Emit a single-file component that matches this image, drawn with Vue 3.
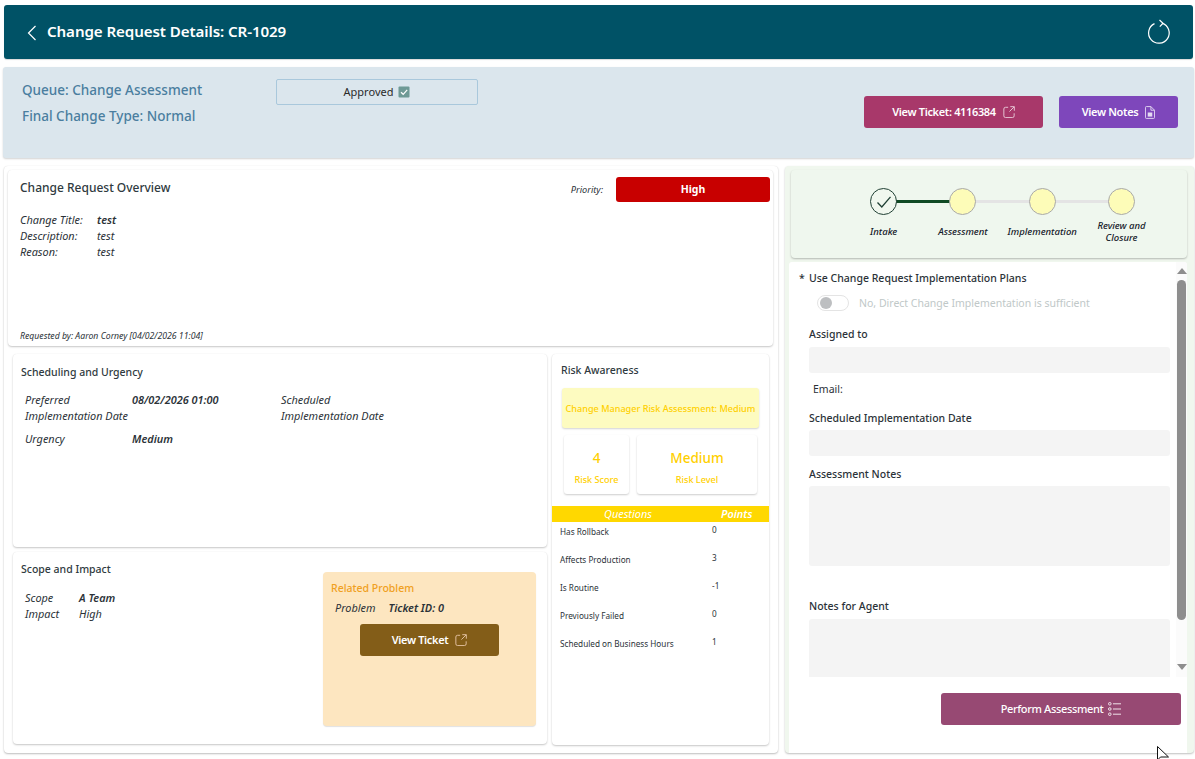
<script setup>
const steps = [
  { name: 'Intake', done: true },
  { name: 'Assessment' },
  { name: 'Implementation' },
  { name: 'Review and Closure' },
]
const questions = [
  ['Has Rollback', '0'],
  ['Affects Production', '3'],
  ['Is Routine', '-1'],
  ['Previously Failed', '0'],
  ['Scheduled on Business Hours', '1'],
]
</script>

<template>
  <div class="page">
    <header class="topbar">
      <svg class="back" width="10" height="16" viewBox="0 0 10 16"><path d="M8.5 1 1.5 8l7 7" fill="none" stroke="#fff" stroke-width="1.2"/></svg>
      <h1>Change Request Details: CR-1029</h1>
      <svg class="refresh" width="24" height="26" viewBox="0 0 24 26"><path d="M15 4.1A10.3 10.3 0 1 1 7.5 4.6" fill="none" stroke="#fff" stroke-width="1.2"/><path d="M12.5 1 16 4.2 12.8 7.6" fill="none" stroke="#fff" stroke-width="1.2"/></svg>
    </header>

    <section class="infobar">
      <div class="queue">
        <div>Queue: Change Assessment</div>
        <div>Final Change Type: Normal</div>
      </div>
      <div class="approved">
        <span>Approved</span>
        <svg width="12" height="12" viewBox="0 0 12 12"><rect x="0.5" y="0.5" width="11" height="11" rx="1" fill="#6f9a96"/><path d="M3 6.2 5.2 8.3 9.2 3.8" fill="none" stroke="#fff" stroke-width="1.2"/></svg>
      </div>
      <div class="info-actions">
        <button class="btn ticket">View Ticket: 4116384
          <svg class="ext" width="12" height="12" viewBox="0 0 14 14"><path d="M6 1.5H3A2 2 0 0 0 1 3.5v8a2 2 0 0 0 2 2h8a2 2 0 0 0 2-2V8.500M8.500 .8h4.700v4.700M13 1 7.500 6.500" fill="none" stroke="#e9cbd8" stroke-width="1.100"/></svg>
        </button>
        <button class="btn notes">View Notes
          <svg width="10" height="13" viewBox="0 0 11 14"><path d="M1.500 .5h5l4 4v8a1 1 0 0 1-1 1h-8a1 1 0 0 1-1-1v-11a1 1 0 0 1 1-1zM6.500 .5v4h4" fill="none" stroke="#e6dcf3" stroke-width="1"/><rect x="3" y="7" width="5" height="4.500" fill="#e6dcf3"/></svg>
        </button>
      </div>
    </section>

    <main class="main">
      <div class="left">
        <section class="card overview">
          <div class="ov-head">
            <h2>Change Request Overview</h2>
            <span class="priority-label">Priority:</span>
            <span class="priority">High</span>
          </div>
          <dl class="ov-grid">
            <dt>Change Title:</dt><dd class="semi">test</dd>
            <dt>Description:</dt><dd>test</dd>
            <dt>Reason:</dt><dd>test</dd>
          </dl>
          <div class="requested">Requested by: Aaron Corney [04/02/2026 11:04]</div>
        </section>

        <div class="lower">
          <div class="col">
            <section class="card sched">
              <h3>Scheduling and Urgency</h3>
              <div class="sched-grid">
                <div class="lab">Preferred<br>Implementation Date</div>
                <div class="val">08/02/2026 01:00</div>
                <div class="lab">Scheduled<br>Implementation Date</div>
                <div class="lab urgency">Urgency</div>
                <div class="val urgency">Medium</div>
              </div>
            </section>
            <section class="card scope">
              <div class="scope-main">
                <h3>Scope and Impact</h3>
                <dl class="scope-grid">
                  <dt>Scope</dt><dd class="semi">A Team</dd>
                  <dt>Impact</dt><dd>High</dd>
                </dl>
              </div>
              <div class="related">
                <div class="rel-title">Related Problem</div>
                <div class="rel-row"><span>Problem</span><b>Ticket ID: 0</b></div>
                <button class="btn rel-btn">View Ticket
                  <svg class="ext" width="12" height="12" viewBox="0 0 14 14"><path d="M6 1.500H3A2 2 0 0 0 1 3.500v8a2 2 0 0 0 2 2h8a2 2 0 0 0 2-2V8.500M8.500 .8h4.700v4.700M13 1 7.500 6.500" fill="none" stroke="#e5c4a4" stroke-width="1.100"/></svg>
                </button>
              </div>
            </section>
          </div>

          <section class="card risk">
            <h3>Risk Awareness</h3>
            <div class="risk-banner">Change Manager Risk Assessment: Medium</div>
            <div class="stats">
              <div class="stat s1"><strong>4</strong><span>Risk Score</span></div>
              <div class="stat s2"><strong>Medium</strong><span>Risk Level</span></div>
            </div>
            <div class="q-head"><span>Questions</span><b>Points</b></div>
            <div v-for="q in questions" :key="q[0]" class="q-row">
              <span>{{ q[0] }}</span><em>{{ q[1] }}</em>
            </div>
          </section>
        </div>
      </div>

      <aside class="right">
        <section class="stepper">
          <div v-for="(s, i) in steps" :key="s.name" class="step">
            <span v-if="i < 3" class="line" :class="{ on: s.done }"></span>
            <span class="dot" :class="{ done: s.done }">
              <svg v-if="s.done" width="16" height="14" viewBox="0 0 16 14"><path d="M1.500 7.500 5.800 12 14.500 1.800" fill="none" stroke="#1f3f33" stroke-width="1.300"/></svg>
            </span>
            <span class="step-name">{{ s.name }}</span>
          </div>
        </section>

        <section class="formwrap">
          <div class="form">
            <div class="req"><i>*</i>Use Change Request Implementation Plans</div>
            <div class="toggle-row"><span class="toggle"><span></span></span>No, Direct Change Implementation is sufficient</div>
            <label class="l-assigned">Assigned to</label>
            <div class="input h26"></div>
            <div class="email">Email:</div>
            <label class="l-sched">Scheduled Implementation Date</label>
            <div class="input h26 tight"></div>
            <label class="l-notes">Assessment Notes</label>
            <div class="input h80 tight"></div>
            <label class="l-agent">Notes for Agent</label>
            <div class="input h80"></div>
          </div>
          <div class="scrollbar">
            <span class="arrow up"></span>
            <span class="thumb"></span>
            <span class="arrow down"></span>
          </div>
        </section>

        <div class="perform-row">
          <button class="btn perform">Perform Assessment
            <svg width="13" height="14" viewBox="0 0 13 14"><g fill="none" stroke="#f0e3ea"><circle cx="1.800" cy="1.800" r="1.300"/><circle cx="1.800" cy="7" r="1.300"/><circle cx="1.800" cy="12.200" r="1.300"/><path d="M5 1.800h8M5 7h8M5 12.200h8"/></g></svg>
          </button>
        </div>
      </aside>
    </main>

    <svg class="cursor" width="13" height="14" viewBox="0 0 13 14"><path d="M.5.500V14L3.500 11H11.500Z" fill="#fff" stroke="#111" stroke-width="1"/></svg>
  </div>
</template>

<style>
html, body { margin: 0; background: #fff; overflow: hidden; }
</style>

<style scoped>
.page {
  position: relative;
  width: 1195px;
  height: 759px;
  padding-top: 5px;
  box-sizing: border-box;
  overflow: hidden;
  font-family: "Noto Sans", "Open Sans", sans-serif;
  color: #2b3238;
  font-size: 10.5px;
}
h1, h2, h3, dl, dd { margin: 0; font-weight: 400; }
button { font-family: inherit; border: 0; cursor: pointer; }

.topbar {
  height: 54px;
  margin: 0 2px 0 4px;
  background: #005266;
  border-radius: 3px;
  display: flex;
  align-items: center;
  padding: 0 22px 0 23px;
  color: #fff;
  box-shadow: 0 1px 1px rgba(0, 0, 0, .15);
}
.topbar h1 { font-size: 15.15px; font-weight: 600; margin: -2px 0 0 10px; flex: 1; letter-spacing: -.1px; }
.back { margin-top: 2px; }

.infobar {
  height: 91px;
  margin: 8px 1px 0 3px;
  background: #dbe6ed;
  border-radius: 3px;
  box-shadow: 0 1px 2px rgba(0, 0, 0, .18);
  display: flex;
  padding: 12px 16px 0 19px;
  box-sizing: border-box;
}
.queue { width: 254px; color: #4a7e9f; font-size: 13.5px; font-weight: 500; line-height: 26px; margin-top: -2px; }
.approved {
  width: 200px;
  height: 24px;
  border: 1px solid #a9c8dc;
  border-radius: 2px;
  display: flex;
  align-items: center;
  justify-content: center;
  gap: 5px;
  color: #2a2a2a;
  font-size: 11px;
}
.approved span { margin-top: -2px; }
.info-actions { margin-left: auto; margin-top: 17px; display: flex; gap: 16px; }
.btn {
  height: 32px;
  border-radius: 3px;
  color: #fff;
  font-size: 11px;
  font-weight: 600;
  letter-spacing: -.35px;
  display: flex;
  align-items: center;
  justify-content: center;
  gap: 7px;
  padding: 0 0 2px;
}
.btn svg { margin-top: 2px; }
.ticket { width: 179px; background: #a8386a; }
.notes { width: 119px; background: #7e47bb; }

.main { display: flex; gap: 7px; margin: 8px 1px 0 4px; height: 587px; }
.left {
  width: 774px;
  box-sizing: border-box;
  padding: 4px 5px 0 4px;
  border-radius: 4px;
  box-shadow: 0 1px 2px rgba(0, 0, 0, .25), 0 0 1px rgba(0, 0, 0, .1);
}
.card {
  background: #fff;
  border-radius: 4px;
  box-shadow: 0 1px 2px rgba(0, 0, 0, .22), 0 0 1px rgba(0, 0, 0, .08);
  box-sizing: border-box;
}
.overview { height: 176px; padding: 7px 3px 4px 12px; display: flex; flex-direction: column; }
.ov-head { display: flex; align-items: center; height: 25px; }
.ov-head h2 { font-size: 12px; font-weight: 500; flex: 1; color: #2f3a40; margin-top: -4px; }
.priority-label { font-style: italic; font-size: 9.2px; margin-right: 13px; }
.priority {
  width: 154px;
  height: 25px;
  background: #c80000;
  color: #fff;
  border-radius: 3px;
  font-weight: 700;
  display: flex;
  align-items: center;
  justify-content: center;
  font-size: 10.5px;
  padding-bottom: 2px;
  box-sizing: border-box;
}
.ov-grid { display: grid; grid-template-columns: 77px 1fr; margin-top: 10px; line-height: 16px; font-style: italic; font-size: 10.9px; }
.semi { font-weight: 600; }
.requested { margin-top: auto; font-style: italic; font-size: 8.7px; line-height: 12px; }

.lower { display: flex; gap: 5px; margin-top: 8px; padding-left: 5px; }
.col { width: 534px; display: flex; flex-direction: column; gap: 5px; }
h3 { font-size: 10.5px; font-weight: 500; color: #2f3a40; line-height: 16px; }
.sched { height: 193px; padding: 10px 8px; }
.sched-grid {
  display: grid;
  grid-template-columns: 107px 149px 1fr;
  margin: 12px 0 0 4px;
  line-height: 16px;
  font-style: italic;
  font-size: 10.9px;
}
.val { font-weight: 600; }
.urgency { margin-top: 7px; }
.scope { height: 192px; display: flex; padding: 9px 11px 0 8px; }
.scope-main { flex: 1; }
.scope-grid { display: grid; grid-template-columns: 54px 1fr; margin: 13px 0 0 4px; line-height: 16px; font-style: italic; font-size: 10.9px; }
.related {
  width: 213px;
  height: 154px;
  margin-top: 11px;
  background: #fde6c0;
  border-radius: 4px;
  box-shadow: 0 1px 1px rgba(0, 0, 0, .12);
  padding: 8px 8px 0;
  box-sizing: border-box;
}
.rel-title { color: #f0a020; font-size: 10.5px; line-height: 16px; font-weight: 500; }
.rel-row { margin: 4px 0 0 4px; line-height: 16px; font-style: italic; font-size: 10.9px; display: flex; gap: 13px; }
.rel-row b { font-weight: 600; }
.rel-btn { width: 139px; background: #835d18; margin: 8px 0 0 29px; }

.risk { width: 217px; height: 391px; padding-top: 8px; }
.risk h3 { margin-left: 9px; }
.risk-banner {
  margin: 10px 10px 0;
  height: 40px;
  background: #fdfbc0;
  border-radius: 3px;
  box-shadow: 0 1px 2px rgba(0, 0, 0, .18);
  color: #ffd000;
  font-size: 9.1px;
  font-weight: 500;
  display: flex;
  align-items: center;
  justify-content: center;
  white-space: nowrap;
}
.stats { display: flex; gap: 8px; margin: 7px 12px 0; }
.stat {
  height: 59px;
  border-radius: 3px;
  box-shadow: 0 1px 2px rgba(0, 0, 0, .2);
  display: flex;
  flex-direction: column;
  align-items: center;
  color: #ffd000;
  padding-top: 13px;
  box-sizing: border-box;
}
.s1 { width: 65px; }
.s2 { width: 120px; }
.stat strong { font-size: 13.5px; font-weight: 500; line-height: 20px; }
.stat span { font-size: 9.1px; font-weight: 500; line-height: 14px; margin-top: 5px; }
.q-head {
  margin-top: 12px;
  height: 16px;
  background: #ffd800;
  color: #fff;
  font-style: italic;
  font-size: 10.9px;
  line-height: 16px;
  display: flex;
}
.q-head span { width: 152px; text-align: center; }
.q-head b { font-weight: 600; margin-left: 17px; }
.q-row { height: 28px; display: flex; padding-left: 8px; font-size: 8.2px; color: #2b3238; }
.q-row span { width: 152px; margin-top: 4px; line-height: 12px; white-space: nowrap; }
.q-row em { font-style: normal; line-height: 12px; margin-top: 2px; }

.right {
  width: 409px;
  box-sizing: border-box;
  background: #f0f7ee;
  border-radius: 4px;
  box-shadow: 0 1px 2px rgba(0, 0, 0, .25);
  padding: 4px 7px 0 4px;
  display: flex;
  flex-direction: column;
}
.stepper {
  height: 88px;
  margin-left: 2px;
  background: #eff7ee;
  border-radius: 4px;
  box-shadow: 0 1px 2px rgba(0, 0, 0, .25);
  padding: 18px 0 0 53px;
  display: flex;
  box-sizing: border-box;
}
.step { width: 79.3px; position: relative; display: flex; flex-direction: column; align-items: center; }
.dot {
  width: 27px;
  height: 27px;
  box-sizing: border-box;
  border-radius: 50%;
  background: #fdfcb8;
  border: 1px solid #a9a9a9;
  position: relative;
  z-index: 1;
  display: flex;
  align-items: center;
  justify-content: center;
}
.dot.done { background: #f0f7ee; border: 1.5px solid #1f3f33; }
.line { position: absolute; left: 50%; top: 12px; width: 79.3px; height: 3px; background: #e4e4e4; }
.line.on { background: #0f4a24; }
.step-name {
  font-style: italic;
  font-weight: 500;
  font-size: 9.5px;
  line-height: 12px;
  color: #15202a;
  text-align: center;
  width: 70px;
  height: 24px;
  margin-top: 5px;
  display: flex;
  align-items: center;
  justify-content: center;
}
.formwrap { display: flex; height: 415px; margin-top: 4px; background: #fff; overflow: hidden; border-radius: 3px 3px 0 0; }
.form { flex: 1; overflow: hidden; padding: 8px 6px 0 20px; color: #2b3238; }
.req { line-height: 16px; position: relative; font-weight: 500; }
.req i { position: absolute; left: -10px; font-style: normal; }
.toggle-row { display: flex; align-items: center; color: #c0c8c8; margin: 9px 0 0 8px; height: 16px; }
.toggle {
  width: 32px;
  height: 16px;
  box-sizing: border-box;
  border: 1px solid #e4e4e4;
  border-radius: 8px;
  margin-right: 10px;
  display: flex;
  align-items: center;
  padding-left: 2px;
}
.toggle span { width: 12px; height: 12px; border-radius: 50%; background: #bdbfc1; }
label { display: block; line-height: 16px; font-weight: 500; }
.l-assigned { margin-top: 15px; }
.l-sched { margin-top: 13px; }
.l-notes { margin-top: 10px; }
.l-agent { margin-top: 32px; }
.input { background: #f4f4f4; border-radius: 3px; margin-top: 5px; }
.tight { margin-top: 4px; }
.h26 { height: 26px; }
.h80 { height: 80px; }
.email { margin: 8px 0 0 4px; line-height: 16px; font-size: 10.5px; }
.scrollbar { width: 11px; background: #fbfbfb; display: flex; flex-direction: column; align-items: center; padding-top: 6px; }
.arrow { width: 0; height: 0; border-left: 5px solid transparent; border-right: 5px solid transparent; }
.up { border-bottom: 6px solid #8e8e8e; }
.down { border-top: 6px solid #8e8e8e; margin-top: 44px; }
.thumb { width: 9px; height: 340px; margin-top: 6px; background: #8e8e8e; border-radius: 4.500px; }
.perform-row { flex: 1; background: #fff; display: flex; justify-content: flex-end; padding: 16px 6px 0 0; }
.perform { width: 240px; background: #974973; font-weight: 500; gap: 5px; }

.cursor { position: absolute; left: 1157px; top: 746px; }
</style>
